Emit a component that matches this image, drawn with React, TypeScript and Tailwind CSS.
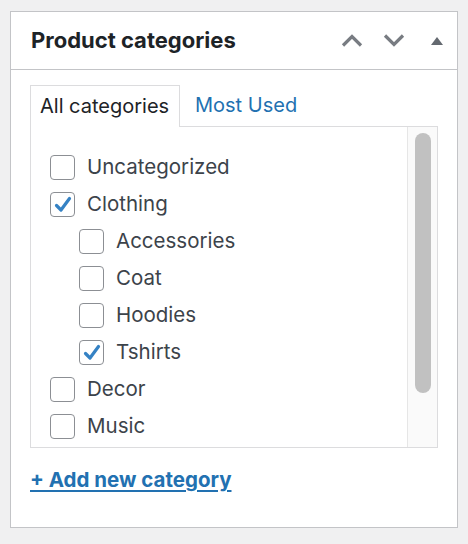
const CATEGORIES = [
  { name: 'Uncategorized', level: 0, checked: false },
  { name: 'Clothing', level: 0, checked: true },
  { name: 'Accessories', level: 1, checked: false },
  { name: 'Coat', level: 1, checked: false },
  { name: 'Hoodies', level: 1, checked: false },
  { name: 'Tshirts', level: 1, checked: true },
  { name: 'Decor', level: 0, checked: false },
  { name: 'Music', level: 0, checked: false },
];

function Checkbox({ checked }: { checked: boolean }) {
  return (
    <span className="w-[25px] h-[25px] shrink-0 rounded-[4px] border border-[#8c8f94] bg-white flex items-center justify-center">
      {checked && (
        <svg width="20" height="20" viewBox="0 0 20 20">
          <path d="M3.5 10.5 L8 15 L16.5 3.5" fill="none" stroke="#3582c4" strokeWidth="3.2" strokeLinecap="round" strokeLinejoin="round" />
        </svg>
      )}
    </span>
  );
}

export default function App() {
  return (
    <div className="min-h-[544px] bg-[#f0f0f1] pt-[11px] pl-[10px]" style={{ fontFamily: 'Inter, "Noto Sans", sans-serif' }}>
      <div className="w-[448px] h-[517px] bg-white border border-[#c3c4c7]">
        <div className="h-[58px] border-b border-[#c3c4c7] flex items-center pl-[20px]">
          <h2 className="text-[22px] font-bold text-[#1d2327] leading-none -mt-[2px]">Product categories</h2>
          <div className="ml-auto flex items-center">
            <button className="w-[42px] h-[30px] flex items-center justify-center">
              <svg width="22" height="13" viewBox="0 0 22 13">
                <path d="M2 11.5 L11 2.5 L20 11.5" fill="none" stroke="#787c82" strokeWidth="3.2" />
              </svg>
            </button>
            <button className="w-[42px] h-[30px] flex items-center justify-center">
              <svg width="22" height="13" viewBox="0 0 22 13">
                <path d="M2 1.5 L11 10.5 L20 1.5" fill="none" stroke="#787c82" strokeWidth="3.2" />
              </svg>
            </button>
            <button className="w-[42px] h-[30px] flex items-center justify-center pl-[2px]">
              <svg width="14" height="10" viewBox="0 0 14 10">
                <path d="M7 1 L13 9 L1 9 Z" fill="#646970" />
              </svg>
            </button>
          </div>
        </div>
        <div className="pt-[15px] px-[19px]">
          <div className="flex text-[20px]">
            <div className="w-[150px] h-[42px] -mb-px relative border border-b-0 border-[#dcdcde] bg-white flex items-center pl-[9px] pb-[2px] text-[#1d2327]">
              All categories
            </div>
            <div className="h-[41px] flex items-center pl-[15px] pb-[2px] text-[#2271b1]">Most Used</div>
          </div>
          <div className="w-[408px] h-[322px] border border-[#dcdcde] flex overflow-hidden">
            <ul className="flex-1 pt-[22px] pl-[19px]">
              {CATEGORIES.map(c => (
                <li
                  key={c.name}
                  className={`h-[37px] flex items-center gap-[12px] text-[20.5px] text-[#3c434a] ${c.level === 1 ? 'pl-[29px]' : ''}`}
                >
                  <Checkbox checked={c.checked} />
                  <span>{c.name}</span>
                </li>
              ))}
            </ul>
            <div className="w-[30px] border-l border-[#e6e6e6] bg-[#fafafa] pt-[6px] flex justify-center">
              <div className="w-[16px] h-[260px] rounded-full bg-[#c1c1c1]" />
            </div>
          </div>
          <a href="#" className="block mt-[17px] text-[20.5px] font-bold text-[#2271b1] underline underline-offset-[3px] decoration-[2px]">
            + Add new category
          </a>
        </div>
      </div>
    </div>
  );
}
